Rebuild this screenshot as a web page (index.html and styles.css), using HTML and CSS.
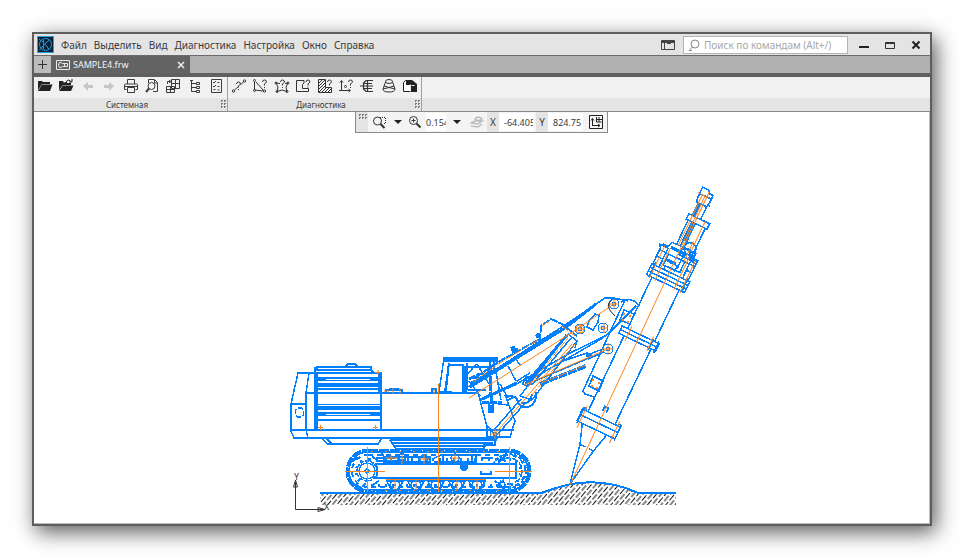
FILE: index.html
```html
<!DOCTYPE html>
<html lang="ru">
<head>
<meta charset="utf-8">
<title>SAMPLE4.frw</title>
<link rel="stylesheet" href="styles.css">
</head>
<body>
<div class="window">
  <header class="titlebar">
    <svg class="logo" viewBox="0 0 17 17" aria-hidden="true">
      <rect width="17" height="17" fill="#1ba5e6"/>
      <rect x="1" y="1" width="15" height="15" fill="#0f2033"/>
      <g fill="none" stroke="#1d9be0"><circle cx="8.500" cy="8.500" r="6"/><path d="M6.500 4v9M6.500 9l6-5M8 8l4 5.500M2 3l4 3M2.500 14L6 10"/></g>
    </svg>
    <nav class="menu">
      <a href="#">Файл</a><a href="#">Выделить</a><a href="#">Вид</a><a href="#">Диагностика</a><a href="#">Настройка</a><a href="#">Окно</a><a href="#">Справка</a>
    </nav>
    <button class="plain layout" aria-label="Интерфейс">
      <svg class="i14" viewBox="0 0 14 14" fill="none" stroke="#444"><path d="M.5 2.500h13v9H.5zM.5 4.500h13M3.500 5v6"/><path d="M6 5.500h4M1 3.500h12" /></svg>
    </button>
    <label class="search">
      <svg class="i12" viewBox="0 0 12 12" fill="none" stroke="#888"><circle cx="7" cy="5" r="4"/><path d="M4.500 8L1 11.500M1 11.500h3"/></svg>
      <input type="text" placeholder="Поиск по командам (Alt+/)" aria-label="Поиск по командам">
    </label>
    <div class="winbtns">
      <button class="plain" aria-label="Свернуть"><svg class="i12" viewBox="0 0 12 12" stroke="#222" stroke-width="2"><path d="M1 8h10"/></svg></button>
      <button class="plain" aria-label="Развернуть"><svg class="i12" viewBox="0 0 12 12" fill="none" stroke="#333"><path d="M1.500 3.500h9v6h-9zM1 4.500h10"/></svg></button>
      <button class="plain" aria-label="Закрыть"><svg class="i12" viewBox="0 0 12 12" stroke="#222" stroke-width="2"><path d="M2.500 2.500l7 7M9.500 2.500l-7 7"/></svg></button>
    </div>
  </header>

  <div class="tabs">
    <button class="add" aria-label="Новый документ"><svg class="i12" viewBox="0 0 12 12" stroke="#333"><path d="M5.500 1v9M1 5.500h9"/></svg></button>
    <div class="tab">
      <svg class="i14" viewBox="0 0 14 14" fill="none" stroke="#e8e8e8"><path d="M.5 2.500h13v9H.5z"/><path d="M6.500 5.500h5v3h-5L5 9.500H3.500L2.500 7l1-2.500H5zM8.500 5v4"/></svg>
      <span>SAMPLE4.frw</span>
      <button class="plain close" aria-label="Закрыть вкладку"><svg class="i8" viewBox="0 0 8 8" stroke="#eee" stroke-width="1.500"><path d="M1 1l6 6M7 1L1 7"/></svg></button>
    </div>
  </div>

  <div class="ribbon">
    <section class="group">
      <div class="tools">
        <button class="plain" aria-label="Открыть"><svg class="i16" viewBox="0 0 16 16"><path d="M1 3h4l1 1h7v2H5L1 12z" fill="#222"/><path d="M5 6.500h10.500L13 13H1z" fill="#222"/></svg></button>
        <button class="plain" aria-label="Открыть ещё"><svg class="i16" viewBox="0 0 16 16"><path d="M1 3h4l1 2h7v2H5L1 12z" fill="#222"/><path d="M5 7.500h10.500L13 13H1z" fill="#222"/><path d="M8 3.500q3-3 5 0M14 1v3h-3" fill="none" stroke="#222"/><path d="M6 4h3v3z" fill="#222"/></svg></button>
        <button class="plain" aria-label="Отменить" disabled><svg class="i16" viewBox="0 0 16 16"><path d="M3 8l5-4v3h5v3H8v3z" fill="#c6c6c6"/></svg></button>
        <button class="plain" aria-label="Повторить" disabled><svg class="i16" viewBox="0 0 16 16"><path d="M13 8L8 4v3H3v3h5v3z" fill="#c6c6c6"/></svg></button>
        <button class="plain" aria-label="Печать"><svg class="i16" viewBox="0 0 16 16" fill="none" stroke="#3c3c3c"><path d="M4.500 6V1.500h7V6M3.500 11.500h-2v-5l1-.5h11l1 .5v5h-2M4.500 9.500h7v5h-7zM2 8.500h12"/></svg></button>
        <button class="plain" aria-label="Предварительный просмотр"><svg class="i16" viewBox="0 0 16 16" fill="none" stroke="#3c3c3c"><path d="M4.500 5V1.500h6l3 3v9H9M10.500 2v3h3"/><circle cx="7.500" cy="8" r="3.500"/><path d="M5 10.500L2 14" stroke-width="2"/></svg></button>
        <button class="plain" aria-label="Вставить вид"><svg class="i16" viewBox="0 0 16 16" fill="none" stroke="#3c3c3c"><path d="M6.500 1.500h8v9h-8zM10.500 2v8M7 5.500h7M1.500 8.500h8v6h-8zM5.500 9v5M2 11.500h7M2.500 6V3.500h3M4 2l2 1.500L4 5"/></svg></button>
        <button class="plain" aria-label="Дерево"><svg class="i16" viewBox="0 0 16 16" fill="none" stroke="#3c3c3c"><path d="M4.500 3v10.500H9M4.500 5.500H9M4.500 9.500H9"/><path d="M3 2.500h3M9.500 4.500h3v2h-3zM9.500 8.500h3v2h-3zM9.500 12.500h3v2h-3z"/></svg></button>
        <button class="plain" aria-label="Свойства"><svg class="i16" viewBox="0 0 16 16" fill="none" stroke="#3c3c3c"><path d="M3.500 1.500h10v13h-10z"/><path d="M5 4l1 1 2-2M5 8l1 1 2-2M5.500 11.500h2M9.500 4.500h2M9.500 8.500h2M9.500 12h2"/></svg></button>
      </div>
      <div class="caption"><span>Системная</span><i class="dots"></i></div>
    </section>
    <section class="group">
      <div class="tools">
        <button class="plain" aria-label="Расстояние между точками"><svg class="i16" viewBox="0 0 16 16" fill="none" stroke="#333"><path d="M3.500 12l9-8" stroke-dasharray="5 3"/><circle cx="2.500" cy="13" r="1.200"/><circle cx="13.500" cy="3" r="1.200"/><path d="M5.500 6q0-2 2-2t2 2l-2 2v1.500M7.500 11v1"/></svg></button>
        <button class="plain" aria-label="Угол"><svg class="i16" viewBox="0 0 16 16" fill="none" stroke="#333"><path d="M2.500 3.500v8.500l9 1M4 4l7 8"/><circle cx="2.500" cy="2.500" r="1"/><circle cx="2.500" cy="12.500" r="1"/><circle cx="12.500" cy="13" r="1.200"/><path d="M10.500 4q0-2 2-2t2 2l-2 2v1.500M12.500 9v1"/></svg></button>
        <button class="plain" aria-label="Периметр"><svg class="i16" viewBox="0 0 16 16" fill="none" stroke="#333"><path d="M6 5.500L2 5l2 4-1 4.500q5-3 10 0L12 9l2-4-3 .5"/><circle cx="2" cy="5" r="1"/><circle cx="14" cy="5" r="1"/><circle cx="3" cy="13.500" r="1"/><circle cx="13" cy="13.500" r="1"/><path d="M6.500 4q0-2 2-2t2 2l-2 2v1.500M8.500 9v1"/></svg></button>
        <button class="plain" aria-label="Длина кривой"><svg class="i16" viewBox="0 0 16 16" fill="none" stroke="#333"><path d="M9 2.500H1.500v11h12v-3h-6v-4L9 5z"/><path d="M11 4q0-2 2-2t2 2l-2 2v1.500M13 8.500v1"/></svg></button>
        <button class="plain" aria-label="Площадь"><svg class="i16" viewBox="0 0 16 16" fill="none" stroke="#333"><path d="M1.500 1.500h7v8h6v5h-13z"/><path d="M2 5l3-3M2 8l6-6M2 11l6-6M2 14l6-6M5 14l4-4M8 14l4-4M11 14l3-3"/><path d="M10.500 4q0-2 2-2t2 2l-2 2v1.500"/></svg></button>
        <button class="plain" aria-label="Координаты"><svg class="i16" viewBox="0 0 16 16" fill="none" stroke="#333"><path d="M3.500 13V3M2 4.500L3.500 2.500 5 4.500M3.500 12.500H12M10.500 11l2 1.500-2 1.500M1 12.500h2"/><circle cx="7.500" cy="8.500" r="1"/><path d="M10.500 4q0-2 2-2t2 2l-2 2v1.500M12.500 9v1"/></svg></button>
        <button class="plain" aria-label="МЦХ фигур"><svg class="i16" viewBox="0 0 16 16" fill="none" stroke="#333"><path d="M14 2.500H7L4.500 5v6L7 13.500h7M1 8h13M5 5.500h8M5 10.500h8M8.500 2v12" stroke-width="1.200"/></svg></button>
        <button class="plain" aria-label="МЦХ тел"><svg class="i16" viewBox="0 0 16 16" fill="none" stroke="#333"><ellipse cx="8" cy="3.500" rx="3.500" ry="2"/><path d="M4.500 4L2 11q0 3 6 3t6-3l-2.500-7M3 8q5 3 10 0M2 11q6-3 12 0"/></svg></button>
        <button class="plain" aria-label="Проверка документа"><svg class="i16" viewBox="0 0 16 16"><path d="M1.500 4.500L3.500 2.500h5v11h-7z" fill="#fff" stroke="#222"/><path d="M4 2h6l5 4v8H9V7H4z" fill="#222"/><path d="M9.500 7.500h3M8.500 6.500v7" stroke="#eee"/></svg></button>
      </div>
      <div class="caption"><span>Диагностика</span><i class="dots"></i></div>
    </section>
  </div>

  <main class="canvas">
    <div class="viewbar">
      <span class="handle"><i class="dots wide"></i></span>
      <button class="plain zoomarea" aria-label="Масштаб рамкой"><svg class="i14" viewBox="0 0 14 14" fill="none" stroke="#333"><path d="M8 2.500h5.500v6H11" stroke-dasharray="1 1"/><circle cx="5.500" cy="6" r="4"/><path d="M8.500 9l4 4" stroke-width="2"/></svg></button>
      <button class="plain drop" aria-label="Варианты масштаба"><svg class="i10" viewBox="0 0 10 10"><path d="M1 3h8L5 7z" fill="#222"/></svg></button>
      <button class="plain" aria-label="Увеличить"><svg class="i14" viewBox="0 0 14 14" fill="none" stroke="#333"><circle cx="5.500" cy="5.500" r="4"/><path d="M5.500 3.500v4M3.500 5.500h4"/><path d="M8.500 8.500l4 4" stroke-width="2"/></svg></button>
      <input class="zoomval" type="text" value="0.1543" aria-label="Масштаб">
      <button class="plain drop" aria-label="Список масштабов"><svg class="i10" viewBox="0 0 10 10"><path d="M1 3h8L5 7z" fill="#222"/></svg></button>
      <button class="plain layers" aria-label="Слои" disabled><svg class="i14" viewBox="0 0 14 14" fill="none" stroke="#bcbcbc" stroke-width="1.500"><path d="M1 8l4-2h7l-4 3zM1 11l7 1 4-3M5 4q3-4 7 0-3 3-7 0z"/></svg></button>
      <label class="axis" for="cx">X</label><input class="coord" id="cx" type="text" value="-64.4051">
      <label class="axis" for="cy">Y</label><input class="coord" id="cy" type="text" value="824.7519">
      <button class="plain last" aria-label="Локальная система координат"><svg class="i14" viewBox="0 0 14 14" fill="none" stroke="#222"><path d="M.5.5h13v13H.5z"/><path d="M3.500 11V4M2 5.500L3.500 3.500 5 5.500M3 10.500h8M9 9l2 1.500L9 12M7.500 2v5h5M7 4.500h6M10 2v5"/></svg></button>
    </div>

    <svg class="drawing" viewBox="34 112 896 412" role="img" aria-label="Чертёж буровой машины">
      <defs>
        <pattern id="soil" width="7" height="9" patternUnits="userSpaceOnUse" patternTransform="rotate(40)">
          <path d="M1.500 0V7M5 4V9M5 0V2" stroke="#111" fill="none"/>
        </pattern>
        <g id="roller"><circle r="5"/><path d="M-8-4L-4 5M8-4L4 5M-9-4H9M-1 0H1"/></g>
        <g id="bolt"><circle r="5"/><circle r="2"/></g>
      </defs>

      <path d="M320 494H540L556 489 571 485Q606 478 638 494H676V505H320Z" fill="url(#soil)"/>

      <g class="axes">
        <path d="M295.500 509.500V482M295.500 509.500H324"/>
        <path d="M293.500 487l2-7 2 7zM318 507.500l7 2-7 2z"/>
        <text x="294" y="480">Y</text><text x="324" y="510">X</text>
      </g>

      <g class="part">
        <!-- ground line -->
        <path d="M320 493H541L556 488 571 484Q606 478 638 493H676" stroke-width="2"/>
        <!-- counterweight and deck -->
        <path d="M315 373H298L291 404V431L294 438H497M309 373L306 393V430L308 438M291 404H306M306 393H479M291 430H514"/>
        <rect x="295.500" y="408" width="8" height="9" rx="3" stroke-dasharray="5 2"/>
        <path d="M315 367V430M317 372V430M381 372V430M379 374V393"/>
        <path d="M317 370H371V367H317zM345 367l3-3h7l3 3M371 370l3 3"/>
        <path d="M316 373H380" stroke-width="2"/>
        <path d="M317 379H379M317 385H379M317 408H380M317 414H380" stroke-width="4"/>
        <path d="M317 389H379M317 420H380" stroke-width="2"/>
        <path d="M316 404.500H381" stroke-width="1"/>
        <path class="gap" d="M326 379.500H370M326 414.500H370"/>
        <path d="M321 438L328 444H378L382 438M326 438l6 6M386 392v-2h16v2M390 390v-1h8v1M432 392v-3h4v3"/>
        <path d="M390 440H497M391 443H493M395 446H486M396 449H484" stroke-width="2"/>
        <path d="M390 440L396 449M484 449V445H495V438"/>
        <!-- cab -->
        <path d="M439 392L444 358H497V363M444 361H497M446 392L449 365H463M463 364V392M439 392H452M467 363V390"/>
        <path d="M444 359H497M465 366V392" stroke-width="3"/>
        <path d="M449 363L445 392M494 358V373" stroke-width="2"/>
        <path d="M478 392L487 427V438M505 395L515 421L510 437H487M508 400L514 397M487 425L497 438M484 402L508 405M489 403V412H493V402"/>
        <path d="M468 367H492M468 374l8-10M477 364l12 20M469 381L480 396M490 362L492 400M496 372l5 28M471 378H487M500 384l8 14M482 380L493 364M468 390H486"/>
        <path d="M469 379L480 374M470 384L489 373M490 368V394M482 402H502M491 412V396" stroke-width="3" stroke-dasharray="7 1"/>
        <!-- boom -->
        <path d="M466 388L515 357 565 325 605 298H614L628 301M515 358L520 365M515 385L568 354 607 335M607 335L636 306M481 400L503 389 517 383M508 366L516 381M530 380L603 338"/>
        <path d="M470 387L515 359 565 328 596 304M480 400L517 383" stroke-width="3"/>
        <path d="M476 377L500 361 540 339 541 326 551 319 562 324 577 336M479 380L502 366 542 341" stroke-dasharray="8 1" stroke-width="2"/>
        <path d="M512 352l6-3M511 349l4-2M536 337l4-3" stroke-width="4"/>
        <path d="M595 314L599 315 598 322 593 330 587 327 589 321ZM568 334L577 341 575 348"/>
        <!-- boom cylinder -->
        <path d="M493 431L521 399M497 435L526 402M520 396L568 334M532 400L577 341M520 396L532 400"/>
        <path d="M526 384L567 335" stroke-width="3"/>
        <path d="M532 385L571 338"/>
        <!-- stick cylinder -->
        <path d="M560 362L587 353 589 358 535 381M587 355L603 349M588 359L604 352M517 381L530 373"/>
        <path d="M540 384L586 366M586 355l6 1" stroke-width="4" stroke-dasharray="9 1"/>
        <path d="M517 400Q519 408 528 407 537 404 536 392M521 403Q530 405 532 394M505 397Q517 394 518 402" stroke-width="2"/>
        <path d="M524 380l3-3 4 2v4l-4 3-4-2zM526 380l3 3" stroke-width="2"/>
        <!-- mast bracket -->
        <path d="M625 300Q634 298 639 306M625 300L617 317 588 380 583 391 585 394 594 397M625 300L621 302"/>
        <path d="M624 310l10 4-4 10-10-4zM593 376l10 5-4 10-10-5z"/>
        <g class="fine"><use href="#bolt" x="614" y="304"/><use href="#bolt" x="580" y="329"/><use href="#bolt" x="603" y="328"/><use href="#bolt" x="608" y="349"/><use href="#bolt" x="495" y="434"/></g>
      </g>

      <g class="part" transform="translate(570 484) rotate(25.500)">
        <path d="M0 0L-8-40-15-60M0 0L7-40 12-60M-8-40H-2M2-40H7M-15-73V-157M-15-165V-222M15-73V-157M15-165V-222"/>
        <path d="M-21-73H21V-60H-21zM-21-67H21M-17-75h-3v17M18-75h3v17M-2-80v-5h4v5"/>
        <path d="M-21-165H20V-157H-21zM-21-161H20M13-167v12M19-167v13"/>
        <path d="M-21-234H21V-222H-21zM-21-230H21M-21-226H21M-18-237v16M18-237v16"/>
        <path d="M-20-234V-252L-22-255H-14L-12-262 8-263 10-256H19V-234M-20-250H19M-13-255V-234M-10-250V-238H8V-250M13-255V-234M-8-238V-234M4-240V-258M-5-243H3V-236M-20-243H-13M13-243H19"/>
        <path d="M-11-257H6M-20-256H-14M11-256H20M-10-244H1" stroke-width="3"/>
        <path d="M-7-262V-289M-3-262V-289M1-262V-289M12-263V-289M-9-295H14V-289H-9zM-5-295V-309M4-295V-309M-7-309H4L5-314V-322H1L-1-325H-8V-313zM5-311H7M-7-318H5"/>
        <path d="M-1-289V-269M-4-309V-295" stroke-width="4"/>
        <circle cx="7" cy="-264" r="6"/><path d="M0-262H14V-254H0zM3-258H14M12-256l6 4" stroke-width="2"/>
      </g>

      <!-- tracks -->
      <g class="part">
        <rect x="347" y="450" width="183" height="42" rx="21" stroke-width="3" stroke-dasharray="10 1"/>
        <rect x="349" y="452" width="179" height="38" rx="19"/>
        <rect x="352" y="455" width="173" height="32" rx="16" stroke-dasharray="5 4" stroke-width="2"/>
        <rect x="356" y="459" width="165" height="26" rx="13" stroke-dasharray="2 5" stroke-width="3"/>
        <circle cx="367" cy="471" r="8"/><circle cx="367" cy="471" r="10" stroke-dasharray="4 1"/><circle cx="367" cy="471" r="2"/>
        <circle cx="509" cy="471" r="13" stroke-dasharray="6 2"/><circle cx="509" cy="471" r="17" stroke-dasharray="3 2" stroke-width="2"/>
        <path class="frame" d="M376 464H516V478H376Q379 471 376 464z"/>
        <path d="M376 461H400M383 457H430V462H383M434 458l8-3h34v7H434M481 458h12M481 471v3h10v-3"/>
        <path d="M386 480H486M376 458H396M408 457V463M443 456V463M472 456V463" stroke-width="2"/>
        <use href="#roller" x="395" y="485"/><use href="#roller" x="416" y="485"/><use href="#roller" x="436" y="485"/><use href="#roller" x="457" y="485"/><use href="#roller" x="477" y="485"/>
        <circle cx="424" cy="459" r="4"/><circle cx="455" cy="458" r="4"/><circle cx="464" cy="467" r="2" stroke-width="4"/><circle cx="402" cy="457" r="3"/>
        <path d="M371 486l8-5M498 482l6 7M498 461l8-5M381 452l5 8M356 484l6 5M352 462l5-5M496 486l8-6M500 456l6 6M372 456l6 5" stroke-width="2"/>
      </g>

      <g class="center">
        <path d="M705 196L570 485"/>
        <path d="M438.500 384V492M469 398L568 335 614 304M495 434L572 344M524 385L608 349M345 471.500H385M367.500 447V492M495 471.500H532M509.500 447V492"/>
        <path d="M318 427.500h5M320.500 425v5M373 427.500h5M375.500 425v5M375 372.500h5M378 370v5M384 391h5M393 388v6M400 388v6M434 389v5"/>
        <path d="M385 458H398M391 455v6M419 459h10M424 454v10M451 458h8M455 454v8M395 479v11M416 479v11M457 479v11M477 479v11M402 454v10M386 479.500H486"/>
        <path d="M371 451.500H510M371 490.500H510" stroke-dasharray="2 12"/>
        <path d="M473 382L500 363 538 340M542 326L550 320M562 326L575 336M541 383L586 365M528 387L568 338M532 395L575 344" stroke-dasharray="8 2"/>
        <path d="M609 304h10M614 299v10M575 329h10M580 324v10M599 328h9M604 323v10M602 349h12M608 343v12M490 434h10M495 429v10"/>
        <path d="M624 313v2M630 315v2M623 319v2M628 321v2M593 379v2M599 382v2M592 385v2M597 387v2" stroke-width="2"/>
        <circle cx="580" cy="329" r="4"/>
      </g>
      <g class="center" transform="translate(570 484) rotate(25.500)">
        <path d="M-18-78V-54M18-78V-54M12-169V-153M-12-169V-153M-17-256V-220M17-256V-220M-11-256V-220M10-256V-220M-5-262V-318M7-272V-248M9-262V-296M0-260V-324M-10-318H2"/>
      </g>
      <path d="M612 300Q603 305 615 316" fill="none" stroke="#222"/>
    </svg>
  </main>
</div>
</body>
</html>
```
FILE: styles.css
```css
* { box-sizing: border-box; }

body {
  margin: 0;
  height: 100vh;
  padding: 32px;
  background: #fff;
  color: #3a3a3a;
  font: 10px/14px "Noto Sans", "Open Sans", sans-serif;
}

button, input { font: inherit; color: inherit; }
svg { display: block; flex: none; }

.i8 { width: 8px; height: 8px; }
.i10 { width: 10px; height: 10px; }
.i12 { width: 12px; height: 12px; }
.i14 { width: 14px; height: 14px; }
.i16 { width: 16px; height: 16px; }

.plain {
  display: flex;
  align-items: center;
  justify-content: center;
  padding: 0;
  border: 0;
  background: none;
}

.window {
  display: flex;
  flex-direction: column;
  height: 100%;
  border: 2px solid #5e5e5e;
  background: #fff;
  box-shadow: 4px 6px 20px rgba(0, 0, 0, .65);
}

.titlebar {
  display: flex;
  align-items: center;
  height: 22px;
  padding-left: 3px;
  border-bottom: 1px solid #6b6b6b;
  background: #e4e4e4;
}

.logo { width: 17px; height: 17px; }

.menu {
  display: flex;
  flex: 1;
  gap: 7px;
  padding-left: 7px;
}

.menu a { color: inherit; text-decoration: none; }

.layout { margin-right: 8px; }

.search {
  display: flex;
  align-items: center;
  gap: 4px;
  width: 165px;
  height: 18px;
  padding: 0 4px;
  border: 1px solid #b4b4b4;
  background: #fff;
}

.search input {
  flex: 1;
  min-width: 0;
  padding: 0;
  border: 0;
  background: none;
}

.search input::placeholder { color: #a8a8a8; opacity: 1; }

.winbtns {
  display: flex;
  gap: 14px;
  padding: 0 8px 0 10px;
}

.tabs {
  display: flex;
  height: 21px;
  border-bottom: 4px solid #606060;
  background: #b0b0b0;
}

.add {
  display: flex;
  align-items: center;
  justify-content: center;
  width: 17px;
  padding: 0;
  border: 0;
  background: #bcbcbc;
}

.tab {
  display: flex;
  align-items: center;
  gap: 3px;
  width: 139px;
  padding: 0 5px;
  background: #636363;
  color: #f4f4f4;
  font-size: 9px;
}

.close { margin-left: auto; }

.ribbon {
  display: flex;
  height: 35px;
  border-bottom: 1px solid #8a8a8a;
  background: linear-gradient(#f1f1f1 21px, #e4e4e4 21px);
}

.group {
  width: 194px;
  border-right: 1px solid #a0a0a0;
}

.tools {
  display: flex;
  align-items: center;
  justify-content: space-between;
  height: 21px;
  padding: 0 3px 3px;
}

.caption {
  display: flex;
  align-items: center;
  height: 13px;
  padding-right: 1px;
  font-size: 8px;
}

.caption span { flex: 1; text-align: center; }

.dots {
  width: 6px;
  height: 9px;
  background: conic-gradient(#777 90deg, transparent 0) 0 0 / 3px 3px;
}

.dots.wide { width: 9px; height: 6px; }

.canvas {
  position: relative;
  flex: 1;
  min-height: 0;
  box-shadow: inset -1px -1px #bbb;
}

.drawing { width: 100%; height: 100%; }

.viewbar {
  position: absolute;
  top: 0;
  left: 321px;
  display: flex;
  align-items: center;
  height: 21px;
  border: 1px solid #8a8a8a;
  border-top: 0;
  background: #f4f4f4;
}

.handle {
  align-self: stretch;
  width: 12px;
  padding: 2px;
  background: #e4e4e4;
}

.handle .dots { display: block; }
.zoomarea { margin: 0 7px 0 4px; }
.drop { margin-right: 5px; }

.viewbar input {
  height: 18px;
  padding: 0;
  border: 0;
  background: #fff;
  font-size: 9px;
}

.viewbar .zoomval { width: 20px; margin: 0 6px 0 4px; }

.layers {
  align-self: stretch;
  padding: 0 3px;
}

.axis {
  align-self: stretch;
  width: 12px;
  background: #e4e4e4;
  line-height: 20px;
  text-align: center;
}

.viewbar .coord { width: 35px; padding: 0 1px 0 5px; }
.viewbar .coord + .axis { margin-left: 2px; }
.last { margin: 0 4px 0 6px; }

.part {
  fill: none;
  stroke: #0080ff;
  stroke-width: 1.5;
  shape-rendering: crispEdges;
}

.fine { stroke-width: 1; }
.frame { fill: #fff; }
.gap { stroke: #fff; stroke-width: 1; }

.center {
  fill: none;
  stroke: #ff8419;
  stroke-width: 1;
}

.axes { fill: none; stroke: #333; }

.axes text {
  fill: #333;
  stroke: none;
  font-size: 9px;
}
```
